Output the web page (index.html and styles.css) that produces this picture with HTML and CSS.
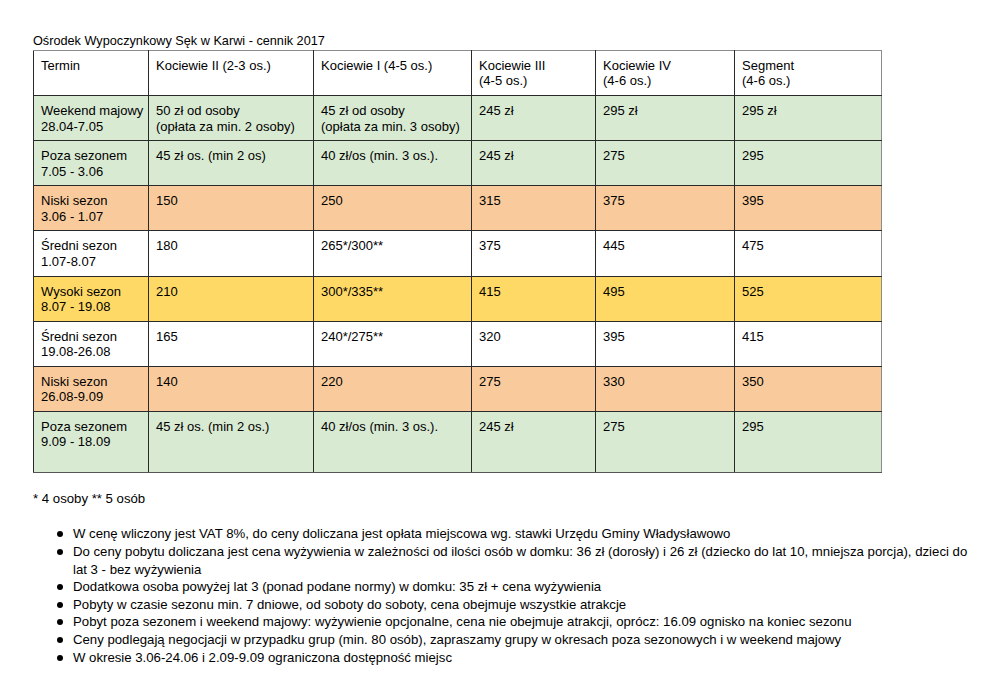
FILE: index.html
```html
<!DOCTYPE html>
<html lang="pl">
<head>
<meta charset="utf-8">
<title>Ośrodek Wypoczynkowy Sęk w Karwi - cennik 2017</title>
<link rel="stylesheet" href="styles.css">
</head>
<body>
<div class="page">
  <p class="title">Ośrodek Wypoczynkowy Sęk w Karwi - cennik 2017</p>
  <table class="prices">
    <colgroup>
      <col class="c1"><col class="c2"><col class="c3"><col class="c4"><col class="c5"><col class="c6">
    </colgroup>
    <tr class="row">
      <td>Termin</td>
      <td>Kociewie II (2-3 os.)</td>
      <td>Kociewie I (4-5 os.)</td>
      <td>Kociewie III<br>(4-5 os.)</td>
      <td>Kociewie IV<br>(4-6 os.)</td>
      <td>Segment<br>(4-6 os.)</td>
    </tr>
    <tr class="row green">
      <td>Weekend majowy<br>28.04-7.05</td>
      <td>50 zł od osoby<br>(opłata za min. 2 osoby)</td>
      <td>45 zł od osoby<br>(opłata za min. 3 osoby)</td>
      <td>245 zł</td>
      <td>295 zł</td>
      <td>295 zł</td>
    </tr>
    <tr class="row green">
      <td>Poza sezonem<br>7.05 - 3.06</td>
      <td>45 zł os. (min 2 os)</td>
      <td>40 zł/os (min. 3 os.).</td>
      <td>245 zł</td>
      <td>275</td>
      <td>295</td>
    </tr>
    <tr class="row orange">
      <td>Niski sezon<br>3.06 - 1.07</td>
      <td>150</td>
      <td>250</td>
      <td>315</td>
      <td>375</td>
      <td>395</td>
    </tr>
    <tr class="row">
      <td>Średni sezon<br>1.07-8.07</td>
      <td>180</td>
      <td>265*/300**</td>
      <td>375</td>
      <td>445</td>
      <td>475</td>
    </tr>
    <tr class="row yellow">
      <td>Wysoki sezon<br>8.07 - 19.08</td>
      <td>210</td>
      <td>300*/335**</td>
      <td>415</td>
      <td>495</td>
      <td>525</td>
    </tr>
    <tr class="row">
      <td>Średni sezon<br>19.08-26.08</td>
      <td>165</td>
      <td>240*/275**</td>
      <td>320</td>
      <td>395</td>
      <td>415</td>
    </tr>
    <tr class="row orange">
      <td>Niski sezon<br>26.08-9.09</td>
      <td>140</td>
      <td>220</td>
      <td>275</td>
      <td>330</td>
      <td>350</td>
    </tr>
    <tr class="row green last">
      <td>Poza sezonem<br>9.09 - 18.09</td>
      <td>45 zł os. (min 2 os.)</td>
      <td>40 zł/os (min. 3 os.).</td>
      <td>245 zł</td>
      <td>275</td>
      <td>295</td>
    </tr>
  </table>
  <p class="note">* 4 osoby ** 5 osób</p>
  <ul class="info">
    <li>W cenę wliczony jest VAT 8%, do ceny doliczana jest opłata miejscowa wg. stawki Urzędu Gminy Władysławowo</li>
    <li>Do ceny pobytu doliczana jest cena wyżywienia w zależności od ilości osób w domku: 36 zł (dorosły) i 26 zł (dziecko do lat 10, mniejsza porcja), dzieci do lat 3 - bez wyżywienia</li>
    <li>Dodatkowa osoba powyżej lat 3 (ponad podane normy) w domku: 35 zł + cena wyżywienia</li>
    <li>Pobyty w czasie sezonu min. 7 dniowe, od soboty do soboty, cena obejmuje wszystkie atrakcje</li>
    <li>Pobyt poza sezonem i weekend majowy: wyżywienie opcjonalne, cena nie obejmuje atrakcji, oprócz: 16.09 ognisko na koniec sezonu</li>
    <li>Ceny podlegają negocjacji w przypadku grup (min. 80 osób), zapraszamy grupy w okresach poza sezonowych i w weekend majowy</li>
    <li>W okresie 3.06-24.06 i 2.09-9.09 ograniczona dostępność miejsc</li>
  </ul>
</div>
</body>
</html>
```

FILE: styles.css
```css
html, body {
  margin: 0;
  padding: 0;
  background: #ffffff;
}

body {
  font-family: "Liberation Sans", Arial, sans-serif;
  font-size: 13.2px;
  color: #000000;
}

.page {
  width: 938px;
  padding: 32px 21px 0 33px;
}

.title {
  margin: 0;
  font-size: 12.7px;
  line-height: 18px;
}

.prices {
  border-collapse: collapse;
  table-layout: fixed;
  width: 848px;
  font-size: 13px;
  border-top: 1px solid #8c8c8c;
  border-right: 1px solid #8c8c8c;
  border-bottom: 1px solid #555555;
  border-left: 1px solid #333333;
}

.c1 { width: 115px; }
.c2 { width: 165px; }
.c3 { width: 158px; }
.c4 { width: 124px; }
.c5 { width: 139px; }
.c6 { width: 147px; }

.prices td {
  border: 1px solid #2a2a2a;
  padding: 7px 3px 6.3px 7px;
  vertical-align: top;
  line-height: 15.4px;
  height: 30.6px;
  box-sizing: content-box;
}

.prices tr:first-child td {
  border-top-color: #8c8c8c;
}

.prices td:last-child {
  border-right-color: #8c8c8c;
}

.prices .last td {
  height: 47px;
  border-bottom-color: #555555;
}

.green td { background: #d9ead3; }
.orange td { background: #f9cb9c; }
.yellow td { background: #ffd966; }

.note {
  margin: 17px 0 0 0;
  line-height: 17.6px;
}

.info {
  margin: 17.6px 0 0 0;
  padding: 0 0 0 40px;
  list-style: none;
  line-height: 17.6px;
}

.info li {
  position: relative;
}

.info li::before {
  content: "";
  position: absolute;
  left: -16px;
  top: 6px;
  width: 6px;
  height: 6px;
  border-radius: 50%;
  background: #000000;
}
```
